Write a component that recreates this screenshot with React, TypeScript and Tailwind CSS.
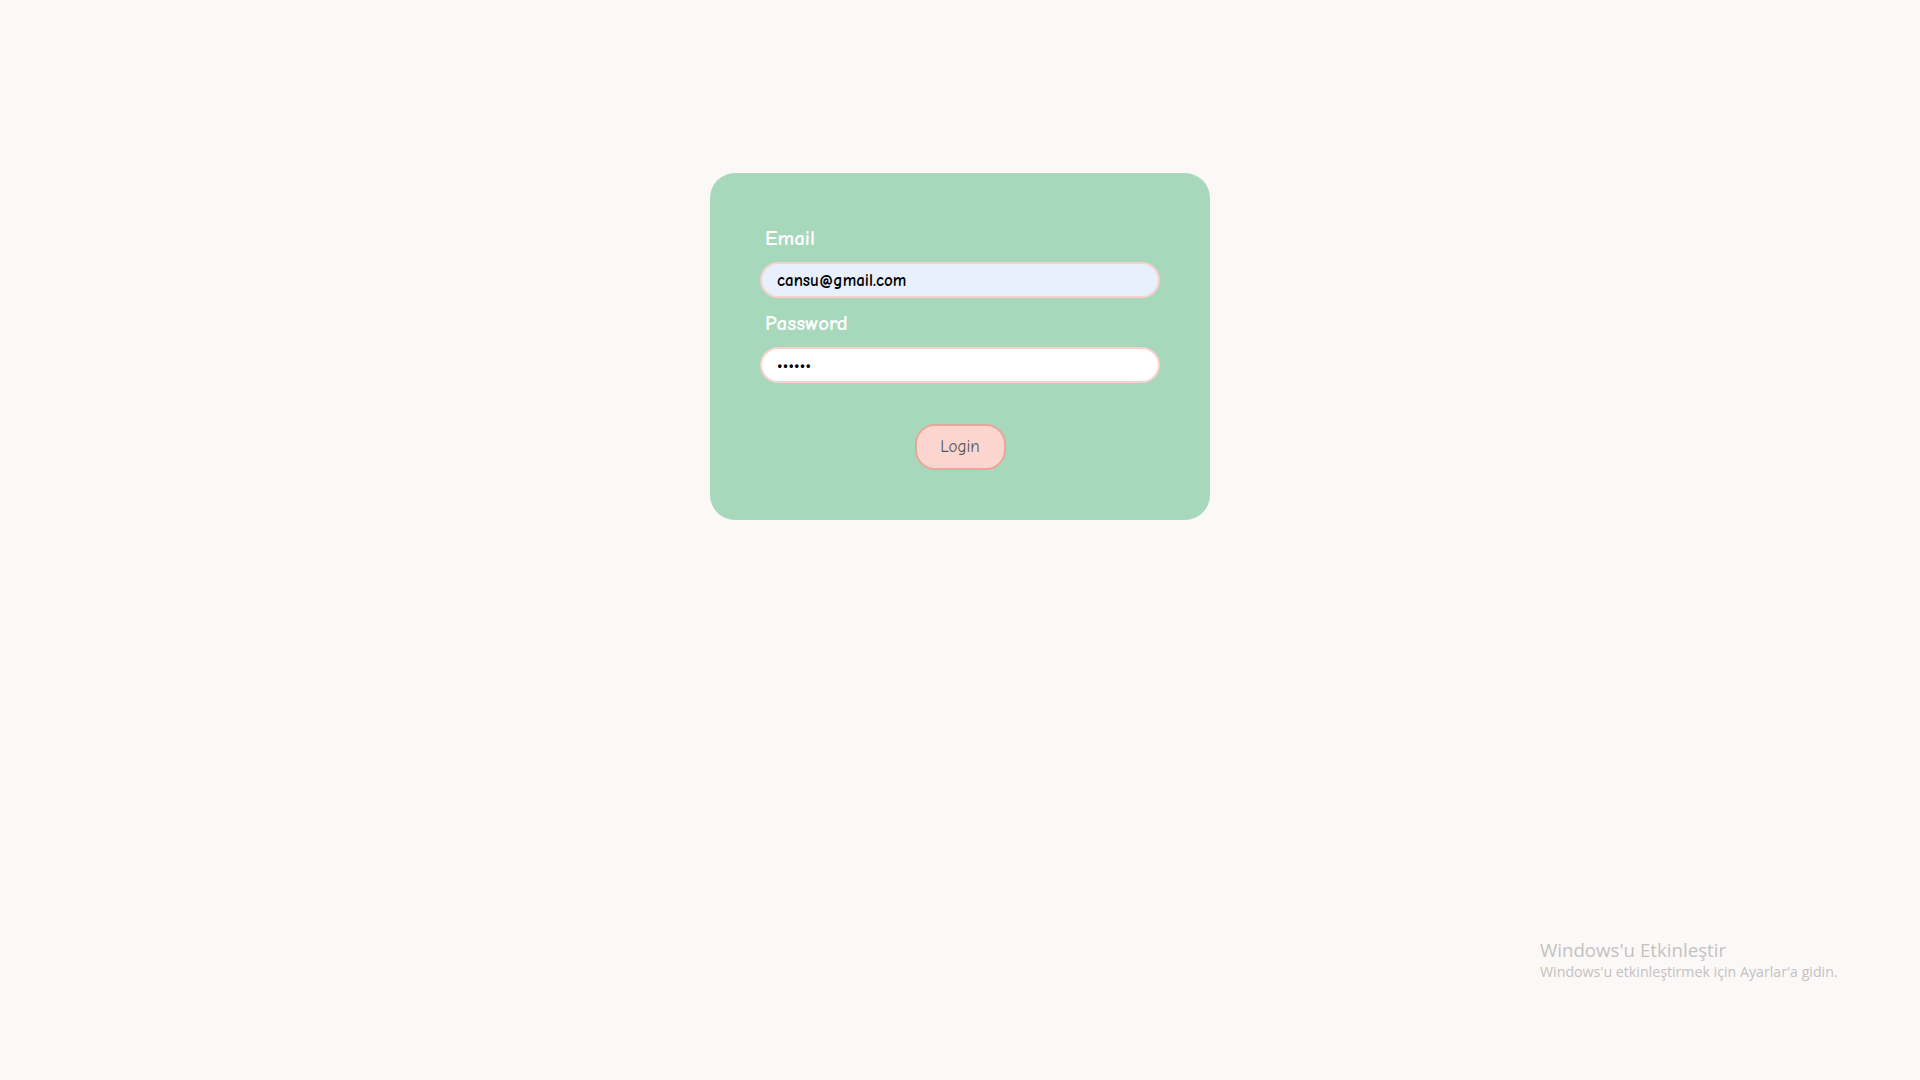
import { FC } from 'react'

const font = { fontFamily: '"Comic Sans MS", "Comic Neue", Lato, "Noto Sans", sans-serif' }

const Field: FC<{ label: string; type: string; value: string; autofill?: boolean }> = ({
  label,
  type,
  value,
  autofill,
}) => (
  <div className="flex flex-col">
    <label className="pl-[5px] text-[21px] font-semibold leading-[28px] text-white">{label}</label>
    <input
      type={type}
      defaultValue={value}
      className={`mt-[10px] h-[36px] w-[400px] rounded-full border-2 border-[#f6d2cb] px-[15px] text-[17px] font-semibold text-black outline-none ${
        autofill ? 'bg-[#e8f0fe]' : 'bg-white'
      }`}
      style={font}
    />
  </div>
)

export default function App() {
  return (
    <div className="relative min-h-screen w-full bg-[#fcf8f7]" style={font}>
      <div className="flex justify-center pt-[173px]">
        <div className="flex h-[347px] w-[500px] flex-col items-center rounded-[25px] bg-[#a8d8bc] pt-[51px]">
          <div className="flex flex-col gap-[11px]">
            <Field label="Email" type="email" value="cansu@gmail.com" autofill />
            <Field label="Password" type="password" value="123456" />
          </div>
          <button
            className="mt-[41px] h-[46px] w-[91px] rounded-[20px] border-2 border-[#e6a79d] bg-[#fcd5ce] text-[17px] font-medium text-[#555]"
            style={font}
          >
            Login
          </button>
        </div>
      </div>
      <div
        className="absolute left-[1540px] top-[937px] text-[#c2c2c2]"
        style={{ fontFamily: '"Open Sans", "Noto Sans", sans-serif' }}
      >
        <p className="text-[18.7px] leading-[25px]">Windows'u Etkinleştir</p>
        <p className="text-[14.2px] leading-[20px]">Windows'u etkinleştirmek için Ayarlar'a gidin.</p>
      </div>
    </div>
  )
}
